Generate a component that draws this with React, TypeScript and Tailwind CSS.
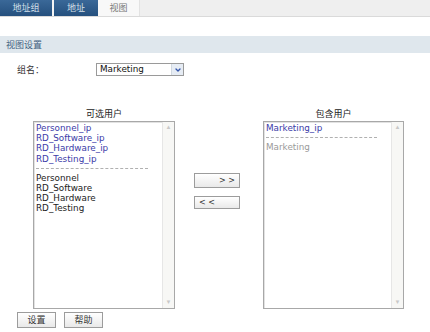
import { ChevronDown } from 'lucide-react'

const cjk = 'font-["Noto_Sans_CJK_SC",sans-serif]'
const latin = 'font-["DejaVu_Sans","Noto_Sans_CJK_SC",sans-serif]'

type Item = { label: string; tone: 'ip' | 'plain' | 'muted' }

const available: (Item | 'sep')[] = [
  { label: 'Personnel_ip', tone: 'ip' },
  { label: 'RD_Software_ip', tone: 'ip' },
  { label: 'RD_Hardware_ip', tone: 'ip' },
  { label: 'RD_Testing_ip', tone: 'ip' },
  'sep',
  { label: 'Personnel', tone: 'plain' },
  { label: 'RD_Software', tone: 'plain' },
  { label: 'RD_Hardware', tone: 'plain' },
  { label: 'RD_Testing', tone: 'plain' },
]

const included: (Item | 'sep')[] = [
  { label: 'Marketing_ip', tone: 'ip' },
  'sep',
  { label: 'Marketing', tone: 'muted' },
]

const toneClass = {
  ip: 'text-[#3b3ba8]',
  plain: 'text-[#222]',
  muted: 'text-[#9a9a9a]',
}

function ListBox({ items }: { items: (Item | 'sep')[] }) {
  return (
    <div className="flex h-[188px] border border-[#a8a8a8] bg-white shadow-[inset_1px_1px_0_#e2e2e2]">
      <div className={`flex-1 pl-[2px] pt-[1px] text-[8.8px] leading-[10.2px] ${latin}`}>
        {items.map((it, i) =>
          it === 'sep' ? (
            <div key={i} className="my-[4px] mr-[14px] border-t border-dashed border-[#b0b0b0]" />
          ) : (
            <div key={i} className={toneClass[it.tone]}>
              {it.label}
            </div>
          ),
        )}
      </div>
      <div className="flex w-[12px] flex-col justify-between border-l border-[#e6e6e6] bg-[#f7f7f5]">
        <div className="flex h-[11px] items-center justify-center text-[6px] text-[#c8c8c8]">▲</div>
        <div className="flex h-[11px] items-center justify-center text-[6px] text-[#c8c8c8]">▼</div>
      </div>
    </div>
  )
}

function GrayButton({ children, className = '' }: { children: React.ReactNode; className?: string }) {
  return (
    <button
      type="button"
      className={`flex items-center border border-[#9c9c9c] bg-gradient-to-b from-white to-[#e9e9e9] text-[#333] ${className}`}
    >
      {children}
    </button>
  )
}

export default function App() {
  return (
    <div className="h-[332px] w-[430px] overflow-hidden bg-white">
      {/* tab bar */}
      <div className="flex h-[17px] border-b border-[#dadada] bg-[#efefef]">
        <div className={`flex w-[52px] items-center justify-center bg-gradient-to-b from-[#3a6898] to-[#25507e] text-[9px] text-[#d6e0ea] ${cjk}`}>
          地址组
        </div>
        <div className="w-[2px] bg-[#f4f4f4]" />
        <div className={`flex w-[44px] items-center justify-center bg-gradient-to-b from-[#3a6898] to-[#25507e] text-[9px] text-[#d6e0ea] ${cjk}`}>
          地址
        </div>
        <div className={`flex w-[42px] items-center justify-center border-r border-[#e2e2e2] bg-[#f8f8f8] text-[9px] text-[#777] ${cjk}`}>
          视图
        </div>
      </div>

      {/* section header */}
      <div className={`mt-[19px] flex h-[17px] items-center bg-[#dfe7ed] pl-[6px] text-[9px] text-[#3f5f80] ${cjk}`}>
        视图设置
      </div>

      {/* group selector */}
      <div className="mt-[10px] flex h-[13px] items-center">
        <span className={`ml-[17px] w-[79px] text-[9px] text-[#333] ${cjk}`}>组名：</span>
        <div className="flex h-[13px] w-[88px] items-center border border-[#9a9a9a] bg-white">
          <span className={`flex-1 pl-[3px] text-[8.8px] leading-none text-[#111] ${latin}`}>Marketing</span>
          <span className="flex h-full w-[12px] items-center justify-center border-l border-[#d0d8e0] bg-[#e6ecf4]">
            <ChevronDown className="h-[8px] w-[8px] text-[#3355aa]" strokeWidth={4} />
          </span>
        </div>
      </div>

      {/* lists */}
      <div className="mt-[32px] flex">
        <div className="ml-[33px] w-[142px]">
          <div className={`mb-[1px] text-center text-[9px] leading-[12px] text-[#222] ${cjk}`}>可选用户</div>
          <ListBox items={available} />
        </div>

        <div className="ml-[19px] flex w-[46px] flex-col gap-[8px] pt-[65px]">
          <GrayButton className={`h-[15px] w-[46px] justify-end pr-[4px] text-[8px] ${latin}`}>&gt; &gt;</GrayButton>
          <GrayButton className={`h-[13px] w-[46px] justify-start pl-[4px] text-[8px] ${latin}`}>&lt; &lt;</GrayButton>
        </div>

        <div className="ml-[23px] w-[141px]">
          <div className={`mb-[1px] text-center text-[9px] leading-[12px] text-[#222] ${cjk}`}>包含用户</div>
          <ListBox items={included} />
        </div>
      </div>

      {/* footer buttons */}
      <div className="ml-[17px] mt-[3px] flex gap-[8px]">
        <GrayButton className={`h-[16px] w-[39px] justify-center text-[9px] ${cjk}`}>设置</GrayButton>
        <GrayButton className={`h-[16px] w-[39px] justify-center text-[9px] ${cjk}`}>帮助</GrayButton>
      </div>
    </div>
  )
}
